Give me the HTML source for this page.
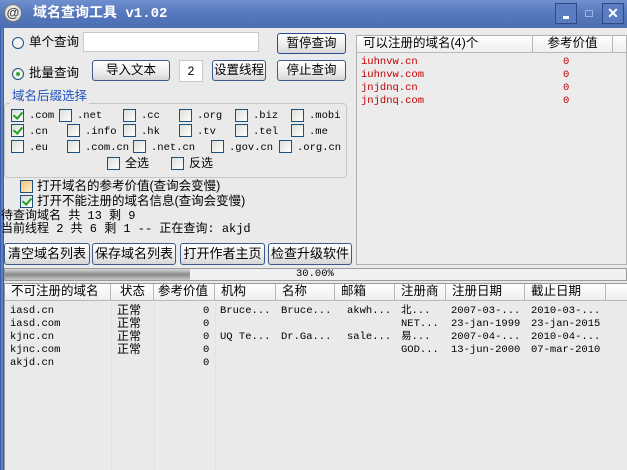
<!DOCTYPE html>
<html><head><meta charset="utf-8"><style>
*{margin:0;padding:0;box-sizing:border-box}
body{width:627px;height:470px;overflow:hidden;background:#eaeaea;font-family:"Liberation Sans","Noto Sans CJK SC",sans-serif;font-size:12px;color:#000;position:relative}
.a{position:absolute;white-space:nowrap;line-height:15px}
.mono{font-family:"Liberation Mono","Noto Sans CJK SC",monospace;font-size:10.5px}
.btn{position:absolute;border:1px solid #3c5a8a;border-radius:3px;background:linear-gradient(#fff,#ececec 60%,#d6d6d6);text-align:center;font-size:12.5px;line-height:18px}
.cb{position:absolute;width:13px;height:13px;border:1px solid #1c5180;background:linear-gradient(135deg,#dcdcd6,#fff)}
.cb.on::after{content:"";position:absolute;left:3px;top:0px;width:4px;height:7px;border:solid #21a121;border-width:0 2px 2px 0;transform:rotate(40deg)}
.rd{position:absolute;width:12px;height:12px;border:1px solid #1c5180;border-radius:50%;background:#f4f4f0}
.lbl{position:absolute;white-space:nowrap;font-family:"Liberation Mono","Noto Sans CJK SC",monospace;font-size:10.5px}
.hdr{position:absolute;top:0;height:17px;border-right:1px solid #b8b8b8;border-bottom:1px solid #b8b8b8;background:linear-gradient(#fff,#eeeeee);padding-left:6px;line-height:15px;font-size:12.5px}
.row{position:absolute;font-family:"Liberation Mono","Noto Sans CJK SC",monospace;font-size:10.5px;line-height:13px}
</style></head><body>
<div class="a" style="left:0;top:0;width:4px;height:470px;background:linear-gradient(90deg,#2a4f9a,#6a8fd0,#2a4f9a)"></div>
<div class="a" style="left:0;top:0;width:627px;height:28px;background:linear-gradient(#6f90cf,#5577bb 50%,#4c6eb2)"></div>
<div class="a" style="left:4px;top:4px;width:18px;height:18px;border-radius:50%;background:radial-gradient(#fff,#cfcfcf);border:1px solid #777;font-size:13px;line-height:16px;text-align:center;font-weight:bold;color:#444">@</div>
<div class="a" style="left:33px;top:6px;color:#fff;font-weight:bold;font-size:14px;line-height:16px;font-family:'Liberation Mono','Noto Sans CJK SC',monospace">域名查询工具 v1.02</div>
<div class="a" style="left:555px;top:3px;width:22px;height:21px;border:1px solid #2b4a86;background:#5a7cc0"><div style="position:absolute;left:7px;top:12px;width:6px;height:3px;background:#fff"></div></div>
<div class="a" style="left:585px;top:10px;width:8px;height:7px;border:1px solid #9fb4dc"></div>
<div class="a" style="left:602px;top:3px;width:22px;height:21px;border:1px solid #2b4a86;background:#5a7cc0;color:#fff;font-weight:bold;text-align:center;line-height:19px;font-size:14px">✕</div>

<div class="rd" style="left:12px;top:37px"></div>
<div class="a" style="left:29px;top:35px;font-size:12.5px">单个查询</div>
<div class="a" style="left:83px;top:32px;width:176px;height:20px;background:#fff;border:1px solid #c8c8c8"></div>
<div class="btn" style="left:277px;top:33px;width:69px;height:21px;border-color:#2a4a90">暂停查询</div>
<div class="rd" style="left:12px;top:68px"><div style="position:absolute;left:3px;top:3px;width:4px;height:4px;border-radius:50%;background:#3a3"></div></div>
<div class="a" style="left:29px;top:66px;font-size:12.5px">批量查询</div>
<div class="btn" style="left:92px;top:60px;width:78px;height:21px">导入文本</div>
<div class="a" style="left:179px;top:60px;width:24px;height:22px;background:#fff;border:1px solid #c8c8c8;text-align:center;line-height:20px">2</div>
<div class="btn" style="left:212px;top:60px;width:54px;height:21px">设置线程</div>
<div class="btn" style="left:277px;top:60px;width:69px;height:21px">停止查询</div>

<div class="a" style="left:4px;top:103px;width:343px;height:75px;border:1px solid #c8c8c0;border-radius:4px"></div>
<div class="a" style="left:10px;top:89px;padding:0 2px;background:#eaeaea;color:#1f52c0;font-size:12.5px">域名后缀选择</div>

<div class="cb on" style="left:11px;top:109px"></div><div class="lbl" style="left:29px;top:110px">.com</div>
<div class="cb" style="left:59px;top:109px"></div><div class="lbl" style="left:77px;top:110px">.net</div>
<div class="cb" style="left:123px;top:109px"></div><div class="lbl" style="left:141px;top:110px">.cc</div>
<div class="cb" style="left:179px;top:109px"></div><div class="lbl" style="left:197px;top:110px">.org</div>
<div class="cb" style="left:235px;top:109px"></div><div class="lbl" style="left:253px;top:110px">.biz</div>
<div class="cb" style="left:291px;top:109px"></div><div class="lbl" style="left:309px;top:110px">.mobi</div>

<div class="cb on" style="left:11px;top:124px"></div><div class="lbl" style="left:29px;top:126px">.cn</div>
<div class="cb" style="left:67px;top:124px"></div><div class="lbl" style="left:85px;top:126px">.info</div>
<div class="cb" style="left:123px;top:124px"></div><div class="lbl" style="left:141px;top:126px">.hk</div>
<div class="cb" style="left:179px;top:124px"></div><div class="lbl" style="left:197px;top:126px">.tv</div>
<div class="cb" style="left:235px;top:124px"></div><div class="lbl" style="left:253px;top:126px">.tel</div>
<div class="cb" style="left:291px;top:124px"></div><div class="lbl" style="left:309px;top:126px">.me</div>

<div class="cb" style="left:11px;top:140px"></div><div class="lbl" style="left:29px;top:142px">.eu</div>
<div class="cb" style="left:67px;top:140px"></div><div class="lbl" style="left:85px;top:142px">.com.cn</div>
<div class="cb" style="left:133px;top:140px"></div><div class="lbl" style="left:151px;top:142px">.net.cn</div>
<div class="cb" style="left:211px;top:140px"></div><div class="lbl" style="left:229px;top:142px">.gov.cn</div>
<div class="cb" style="left:279px;top:140px"></div><div class="lbl" style="left:297px;top:142px">.org.cn</div>

<div class="cb" style="left:107px;top:157px"></div><div class="a" style="left:125px;top:156px">全选</div>
<div class="cb" style="left:171px;top:157px"></div><div class="a" style="left:189px;top:156px">反选</div>

<div class="cb" style="left:20px;top:180px;background:linear-gradient(135deg,#f0c070,#fff2d0);border-color:#1c5180"></div>
<div class="a" style="left:37px;top:179px;font-size:12.5px">打开域名的参考价值(查询会变慢)</div>
<div class="cb on" style="left:20px;top:195px"></div>
<div class="a" style="left:37px;top:194px;font-size:12.5px">打开不能注册的域名信息(查询会变慢)</div>
<div class="a mono" style="left:1px;top:210px;font-size:12px;line-height:13px">待查询域名 共 13 剩 9</div>
<div class="a mono" style="left:1px;top:223px;font-size:12px;line-height:13px">当前线程 2 共 6 剩 1 -- 正在查询: akjd</div>

<div class="btn" style="left:4px;top:243px;width:86px;height:22px;font-size:13px;line-height:19px">清空域名列表</div>
<div class="btn" style="left:92px;top:243px;width:84px;height:22px;font-size:13px;line-height:19px">保存域名列表</div>
<div class="btn" style="left:180px;top:243px;width:85px;height:22px;font-size:13px;line-height:19px">打开作者主页</div>
<div class="btn" style="left:268px;top:243px;width:84px;height:22px;font-size:13px;line-height:19px">检查升级软件</div>

<div class="a" style="left:4px;top:268px;width:623px;height:13px;border:1px solid #9a9a9a;background:#f0f0f0"></div>
<div class="a" style="left:5px;top:269px;width:185px;height:11px;background:linear-gradient(#d8d8d8,#8a8a8a 50%,#c8c8c8)"></div>
<div class="a mono" style="left:296px;top:268px;font-size:10.5px;line-height:12px">30.00%</div>

<div class="a" style="left:356px;top:35px;width:271px;height:230px;background:#ececec;border:1px solid #b0b0b0;overflow:hidden">
<div class="hdr" style="left:0;width:176px">可以注册的域名(4)个</div>
<div class="hdr" style="left:176px;width:80px;text-align:center;padding:0">参考价值</div>
<div class="hdr" style="left:256px;width:20px"></div>
<div class="row" style="left:4px;top:20px;color:#c00000">iuhnvw.cn<br>iuhnvw.com<br>jnjdnq.cn<br>jnjdnq.com</div>
<div class="row" style="left:206px;top:20px;color:#c00000">0<br>0<br>0<br>0</div>
</div>

<div class="a" style="left:4px;top:283px;width:623px;height:187px;background:#eaeaea;border-top:1px solid #9a9a9a;border-left:1px solid #9a9a9a;overflow:hidden">
<div class="hdr" style="left:0;width:106px">不可注册的域名</div>
<div class="hdr" style="left:106px;width:43px;padding-left:9px">状态</div>
<div class="hdr" style="left:149px;width:61px;padding-left:4px">参考价值</div>
<div class="hdr" style="left:210px;width:61px">机构</div>
<div class="hdr" style="left:271px;width:59px">名称</div>
<div class="hdr" style="left:330px;width:60px">邮箱</div>
<div class="hdr" style="left:390px;width:51px">注册商</div>
<div class="hdr" style="left:441px;width:79px">注册日期</div>
<div class="hdr" style="left:520px;width:81px">截止日期</div>
<div class="hdr" style="left:601px;width:30px"></div>
<div class="a" style="left:106px;top:18px;width:1px;height:170px;background:#e2e2e2"></div>
<div class="a" style="left:149px;top:18px;width:1px;height:170px;background:#e2e2e2"></div>
<div class="a" style="left:210px;top:18px;width:1px;height:170px;background:#e2e2e2"></div>
<div class="row" style="left:5px;top:21px">iasd.cn<br>iasd.com<br>kjnc.cn<br>kjnc.com<br>akjd.cn</div>
<div class="row" style="left:112px;top:19px;line-height:13px;font-family:'Noto Sans CJK SC',sans-serif;font-size:12px">正常<br>正常<br>正常<br>正常</div>
<div class="row" style="left:198px;top:21px">0<br>0<br>0<br>0<br>0</div>
<div class="row" style="left:215px;top:21px">Bruce...<br><br>UQ Te...</div>
<div class="row" style="left:276px;top:21px">Bruce...<br><br>Dr.Ga...</div>
<div class="row" style="left:342px;top:21px">akwh...<br><br>sale...</div>
<div class="row" style="left:396px;top:21px">北...<br>NET...<br>易...<br>GOD...</div>
<div class="row" style="left:446px;top:21px">2007-03-...<br>23-jan-1999<br>2007-04-...<br>13-jun-2000</div>
<div class="row" style="left:526px;top:21px">2010-03-...<br>23-jan-2015<br>2010-04-...<br>07-mar-2010</div>
</div>
</body></html>
